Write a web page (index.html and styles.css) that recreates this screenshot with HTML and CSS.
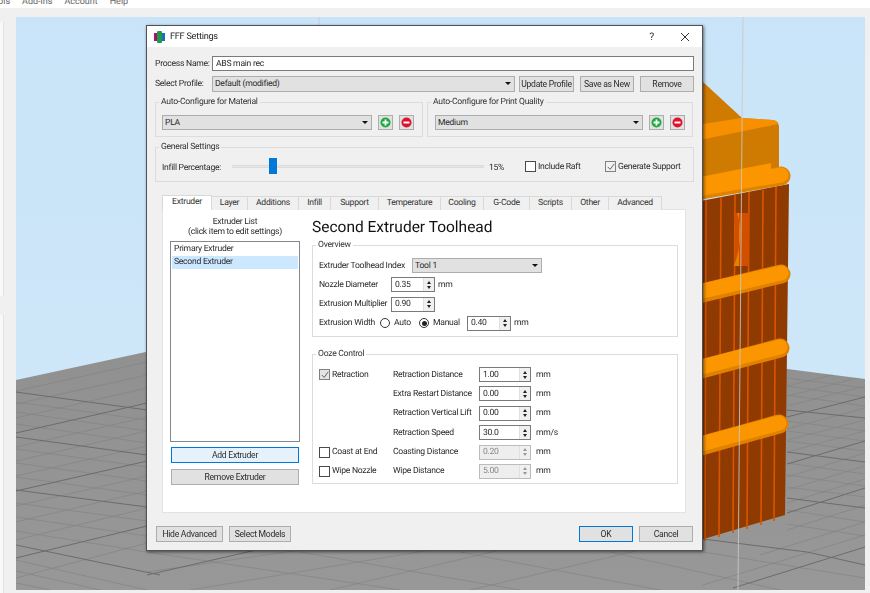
FILE: index.html
```html
<!DOCTYPE html>
<html lang="en">
<head>
<meta charset="utf-8">
<title>FFF Settings</title>
<link rel="stylesheet" href="styles.css">
</head>
<body>
<div class="app">
  <nav class="menubar"><span class="m-tools">Tools</span><span>Add-ins</span><span>Account</span><span>Help</span></nav>
  <div class="workspace">
    <aside class="sidepanel"><div class="panel-a"></div><div class="panel-b"></div></aside>
    <main class="viewport">
      <svg class="scene" viewBox="16 17 849 573" width="849" height="573" aria-hidden="true">
        <defs>
          <linearGradient id="sky" x1="0" y1="0" x2="0" y2="1"><stop offset="0" stop-color="#c9e4f8"/><stop offset="1" stop-color="#d1e8f9"/></linearGradient>
          <linearGradient id="floor" x1="0" y1="0" x2="0" y2="1"><stop offset="0" stop-color="#8f8f8f"/><stop offset="1" stop-color="#989898"/></linearGradient>
          <clipPath id="floorclip"><path d="M16 380L335 311L865 379V590H16Z"/></clipPath>
        </defs>
        <rect x="16" y="17" width="849" height="573" fill="url(#sky)"/>
        <path d="M16 380L335 311L865 379V590H16Z" fill="url(#floor)"/>
        <g clip-path="url(#floorclip)" fill="none">
          <path class="grid-minor" d="M16 402L147 420M16 412L147 431M16 424L147 443M16 449L147 467M16 463L147 481M16 477L147 495M16 503L147 521M16 517L147 536M16 531L147 552M16 560L147 590M16 571L100 590M16 583L50 590M16 391L147 362M16 404L147 375M16 418L147 388M16 447L147 417M16 461L147 431M16 476L147 446M16 506L147 476M16 522L147 491M16 540L147 508M16 578L147 543M147 572L300 550M190 590L430 550M330 590L500 550M470 590L640 550M147 552L400 590M300 552L520 590M460 552L660 590M610 552L780 590M787 378L865 388M787 386L865 397M787 395L865 406M787 421L865 431M787 431L865 441M787 441L865 451M787 463L865 474M787 475L865 486M787 487L865 497M787 510L865 522M787 524L865 536M703 552L865 578M787 386L865 367M787 396L865 376M787 406L865 386M787 429L865 408M787 440L865 420M787 452L865 431M787 477L865 453M787 490L865 466M787 503L865 479M787 530L865 505M760 555L865 522M703 585L865 535"/>
          <path class="grid-major" d="M16 392L147 410M16 433L147 403M16 437L147 455M16 491L147 461M16 490L147 507M16 558L147 526M16 545L160 575M147 575L300 540M787 410L865 418M787 417L865 397M787 452L865 462M787 464L865 441M787 498L865 508M787 513L865 488M703 539L807 552L865 565M733 588L865 547"/>
        </g>
        <path class="rib-wall" d="M690 203L789 184L785 515L690 543Z"/>
        <g class="ribs">
          <path d="M706 200L705 541M721 197L719 537M735 195L733 533M749 192L747 529M763 190L761 525M776 187L774 521"/>
        </g>
        <path d="M735 213H749V266H735Z" fill="#d24f00"/>
        <path d="M737 213C742 226 742 244 734 266H739V213Z" fill="#e28400"/>
        <path d="M690 70L742 118L690 130Z" fill="#cf7a00"/>
        <path d="M690 126L742 118L773 120Q779 121 779 127V172L690 195Z" fill="#cf7a00"/>
        <path d="M690 126L742 118L773 120Q777 121 778 124L690 142Z" fill="#f79000"/>
        <path class="bar-shadow" d="M690 192L781 176"/><path class="bar" d="M690 190L781 175"/>
        <path class="bar-wide" d="M690 179L771 163V178L690 195Z"/>
        <path class="bar-shadow" d="M690 296L781 274"/><path class="bar" d="M690 294L781 273"/>
        <path class="bar-shadow" d="M690 372L780 348"/><path class="bar" d="M690 370L780 347"/>
        <path class="bar-shadow" d="M690 449L779 424"/><path class="bar" d="M690 447L779 423"/>
        <path class="beam" d="M743 17L738 590"/>
        <path class="beam" d="M319 17V30"/>
      </svg>
    </main>
  </div>

  <section class="dialog">
    <header class="titlebar">
      <svg class="app-icon" viewBox="0 0 11 12" width="11" height="12" aria-hidden="true">
        <rect x="0" y="2" width="3" height="8" fill="#a3117f"/>
        <rect x="8" y="2" width="3" height="8" fill="#1a6fc0"/>
        <rect x="3" y="0" width="5" height="12" rx="1" fill="#1f9c45"/>
      </svg>
      <h1 class="window-title">FFF Settings</h1>
      <span class="help-btn">?</span>
      <svg class="close-btn" viewBox="0 0 10 10" width="10" height="10" aria-hidden="true"><path d="M1 1L9 9M9 1L1 9" stroke="#333" stroke-width="1" fill="none"/></svg>
    </header>

    <div class="dialog-body">
      <div class="form-row row-name">
        <label class="top-label">Process Name:</label>
        <div class="text-input">ABS main rec</div>
      </div>
      <div class="form-row row-profile">
        <label class="top-label">Select Profile:</label>
        <div class="combo combo-profile"><span>Default (modified)</span><i class="arrow"></i></div>
        <button class="btn btn-update">Update Profile</button>
        <button class="btn btn-save">Save as New</button>
        <button class="btn btn-remove">Remove</button>
      </div>

      <div class="auto-row">
        <fieldset class="group group-material">
          <legend>Auto-Configure for Material</legend>
          <div class="combo-line">
            <div class="combo combo-material"><span>PLA</span><i class="arrow"></i></div>
            <button class="icon-btn"><svg viewBox="0 0 11 11" width="11" height="11" aria-hidden="true"><circle cx="5.5" cy="5.5" r="5" fill="#1eab3e"/><path d="M5.5 2.5V8.5M2.5 5.5H8.5" stroke="#fff" stroke-width="1.8"/></svg></button>
            <button class="icon-btn"><svg viewBox="0 0 11 11" width="11" height="11" aria-hidden="true"><circle cx="5.5" cy="5.5" r="5" fill="#e0112b"/><path d="M2.5 5.5H8.5" stroke="#fff" stroke-width="2"/></svg></button>
          </div>
        </fieldset>
        <fieldset class="group group-quality">
          <legend>Auto-Configure for Print Quality</legend>
          <div class="combo-line">
            <div class="combo combo-quality"><span>Medium</span><i class="arrow"></i></div>
            <button class="icon-btn"><svg viewBox="0 0 11 11" width="11" height="11" aria-hidden="true"><circle cx="5.5" cy="5.5" r="5" fill="#1eab3e"/><path d="M5.5 2.5V8.5M2.5 5.5H8.5" stroke="#fff" stroke-width="1.8"/></svg></button>
            <button class="icon-btn"><svg viewBox="0 0 11 11" width="11" height="11" aria-hidden="true"><circle cx="5.5" cy="5.5" r="5" fill="#e0112b"/><path d="M2.5 5.5H8.5" stroke="#fff" stroke-width="2"/></svg></button>
          </div>
        </fieldset>
      </div>

      <fieldset class="group group-general">
        <legend>General Settings</legend>
        <div class="general-line">
          <span class="infill-label">Infill Percentage:</span>
          <div class="slider"><i class="slider-thumb"></i></div>
          <span class="percent">15%</span>
          <span class="check raft"><i class="box"></i>Include Raft</span>
          <span class="check"><i class="box checked"><svg viewBox="0 0 10 10" width="8" height="8" aria-hidden="true"><path d="M1 5L4 8L9 1" stroke="#444" fill="none"/></svg></i>Generate Support</span>
        </div>
      </fieldset>

      <div class="tabs">
        <span class="tab active">Extruder</span><span class="tab">Layer</span><span class="tab">Additions</span><span class="tab">Infill</span><span class="tab">Support</span><span class="tab">Temperature</span><span class="tab">Cooling</span><span class="tab">G-Code</span><span class="tab">Scripts</span><span class="tab">Other</span><span class="tab">Advanced</span>
      </div>

      <div class="pane">
        <div class="list-col">
          <p class="list-caption">Extruder List<br>(click item to edit settings)</p>
          <ul class="listbox">
            <li>Primary Extruder</li>
            <li class="selected">Second Extruder</li>
          </ul>
          <button class="btn wide focus-light">Add Extruder</button>
          <button class="btn wide">Remove Extruder</button>
        </div>
        <div class="detail-col">
          <h2 class="detail-title">Second Extruder Toolhead</h2>
          <fieldset class="group group-overview">
            <legend>Overview</legend>
            <div class="ov-row">
              <span class="ov-label-long">Extruder Toolhead Index</span>
              <div class="combo combo-tool"><span>Tool 1</span><i class="arrow"></i></div>
            </div>
            <div class="ov-row">
              <span class="ov-label">Nozzle Diameter</span>
              <div class="spin spin-s"><span>0.35</span><b class="spin-btn"><i class="up"></i><i class="down"></i></b></div>
              <span class="unit">mm</span>
            </div>
            <div class="ov-row">
              <span class="ov-label">Extrusion Multiplier</span>
              <div class="spin spin-s"><span>0.90</span><b class="spin-btn"><i class="up"></i><i class="down"></i></b></div>
            </div>
            <div class="ov-row">
              <span class="ov-label-width">Extrusion Width</span>
              <span class="radio-item auto"><i class="radio"></i>Auto</span>
              <span class="radio-item manual"><i class="radio on"></i>Manual</span>
              <div class="spin spin-s"><span>0.40</span><b class="spin-btn"><i class="up"></i><i class="down"></i></b></div>
              <span class="unit">mm</span>
            </div>
          </fieldset>

          <fieldset class="group group-ooze">
            <legend>Ooze Control</legend>
            <div class="ooze-grid">
              <span class="check"><i class="box checked shaded"><svg viewBox="0 0 10 10" width="8" height="8" aria-hidden="true"><path d="M1 5L4 8L9 1" stroke="#444" fill="none"/></svg></i>Retraction</span>
              <span>Retraction Distance</span>
              <div class="spin"><span>1.00</span><b class="spin-btn"><i class="up"></i><i class="down"></i></b></div>
              <span>mm</span>

              <span class="col-2">Extra Restart Distance</span>
              <div class="spin"><span>0.00</span><b class="spin-btn"><i class="up"></i><i class="down"></i></b></div>
              <span>mm</span>

              <span class="col-2">Retraction Vertical Lift</span>
              <div class="spin"><span>0.00</span><b class="spin-btn"><i class="up"></i><i class="down"></i></b></div>
              <span>mm</span>

              <span class="col-2">Retraction Speed</span>
              <div class="spin"><span>30.0</span><b class="spin-btn"><i class="up"></i><i class="down"></i></b></div>
              <span>mm/s</span>

              <span class="check"><i class="box"></i>Coast at End</span>
              <span>Coasting Distance</span>
              <div class="spin disabled"><span>0.20</span><b class="spin-btn"><i class="up"></i><i class="down"></i></b></div>
              <span>mm</span>

              <span class="check"><i class="box"></i>Wipe Nozzle</span>
              <span>Wipe Distance</span>
              <div class="spin disabled"><span>5.00</span><b class="spin-btn"><i class="up"></i><i class="down"></i></b></div>
              <span>mm</span>
            </div>
          </fieldset>
        </div>
      </div>

      <footer class="dialog-footer">
        <button class="btn btn-hide">Hide Advanced</button>
        <button class="btn btn-models">Select Models</button>
        <span class="spacer"></span>
        <button class="btn btn-ok">OK</button>
        <button class="btn btn-cancel">Cancel</button>
      </footer>
    </div>
  </section>
</div>
</body>
</html>
```

FILE: styles.css
```css
* { box-sizing: border-box; }
html, body { margin: 0; padding: 0; }
body { width: 870px; height: 593px; overflow: hidden; background: #f0f0f0; font-family: Roboto, "Open Sans", sans-serif; font-size: 8.6px; letter-spacing: -.27px; text-rendering: geometricPrecision; color: #2b2b2b; white-space: nowrap; }
button { font: inherit; letter-spacing: inherit; color: inherit; padding: 0; margin: 0; white-space: nowrap; }

.app { position: relative; width: 870px; height: 593px; overflow: hidden; }

.menubar { height: 8px; background: #fff; display: flex; gap: 12px; overflow: hidden; font-size: 9px; letter-spacing: 0; line-height: 6px; color: #666; }
.menubar span { display: block; margin-top: -1px; }
.menubar .m-tools { margin-left: -12px; }

.workspace { display: flex; height: 585px; padding-top: 9px; }
.sidepanel { width: 16px; display: flex; flex-direction: column; gap: 19px; padding-top: 5px; }
.panel-a { width: 4px; height: 274px; background: #f8f8f8; border-right: 1px solid #e4e4e4; }
.panel-b { width: 4px; flex: 1; background: #f8f8f8; border-right: 1px solid #e4e4e4; }
.viewport { width: 849px; height: 573px; overflow: hidden; }
.scene { display: block; filter: blur(.5px); }

.grid-minor { stroke: #848484; stroke-width: .7; }
.grid-major { stroke: #6c6c6c; stroke-width: 1; }
.rib-wall { fill: #8f3a00; }
.ribs path { stroke: #d95600; stroke-width: 1.6; fill: none; }
.bar { stroke: #fb9500; stroke-width: 15; stroke-linecap: round; fill: none; }
.bar-shadow { stroke: #e08200; stroke-width: 19; stroke-linecap: round; fill: none; }
.bar-wide { fill: #fb9500; }
.beam { stroke: #c9c9c9; stroke-width: 1; fill: none; opacity: .85; }

.dialog { position: absolute; left: 146px; top: 25px; width: 557px; height: 526px; background: #f0f0f0; border: 1px solid #4f5357; box-shadow: 1px 1px 3px rgba(0,0,0,.55); display: flex; flex-direction: column; }

.titlebar { height: 21px; flex: none; background: #fff; display: flex; align-items: center; padding: 0 12px 0 7px; filter: blur(.3px); }
.app-icon { flex: none; }
.window-title { margin: 0 0 0 5px; font-size: 9.2px; font-weight: 400; color: #222; flex: 1; }
.help-btn { font-size: 10.5px; margin-right: 26px; color: #333; }

.dialog-body { flex: 1; padding: 9px 8px 0 8px; display: flex; flex-direction: column; filter: blur(.3px); }

.form-row { display: flex; align-items: center; }
.row-name { height: 15px; }
.row-profile { height: 16px; margin-top: 5px; }
.top-label { width: 57px; flex: none; }
.row-name .top-label { padding-top: 1px; }
.text-input { flex: 1; height: 15px; background: #fff; border: 1px solid #7a7a7a; line-height: 13px; padding: 1px 0 0 3px; }

.combo { position: relative; height: 15px; background: #e1e1e1; border: 1px solid #adadad; line-height: 13px; padding: 1px 0 0 2px; flex: none; }
.arrow { position: absolute; right: 3px; top: 5px; width: 0; height: 0; border-left: 3px solid transparent; border-right: 3px solid transparent; border-top: 3px solid #111; }
.combo-profile { width: 303px; height: 16px; line-height: 14px; padding-top: 0; }

.btn { height: 16px; background: #e1e1e1; border: 1px solid #adadad; text-align: center; flex: none; line-height: 13px; }
.btn-update { width: 55px; margin-left: 4px; }
.btn-save { width: 54px; margin-left: 6px; }
.btn-remove { width: 54px; margin-left: 6px; }

.group { margin: 0; padding: 0; border: 1px solid #dcdcdc; min-width: 0; }
.group legend { padding: 0 2px; margin-left: 3px; line-height: 12px; height: 12px; color: #333; }

.auto-row { display: flex; gap: 4px; margin-top: 4px; }
.group-material { width: 268px; height: 41px; }
.group-quality { width: 266px; height: 41px; }
.combo-line { display: flex; align-items: center; padding: 7px 0 0 6px; }
.combo-material { width: 210px; }
.combo-quality { width: 208px; margin-left: 1px; }
.icon-btn { width: 15px; height: 15px; background: #e1e1e1; border: 1px solid #adadad; display: flex; align-items: center; justify-content: center; flex: none; margin-left: 6px; }
.icon-btn svg { display: block; }

.group-general { height: 41px; margin-top: 4px; }
.general-line { display: flex; align-items: center; height: 20px; padding: 7px 0 0 6px; }
.infill-label { width: 70px; flex: none; padding-top: 3px; }
.slider { position: relative; width: 252px; height: 3px; background: #e7e7e7; border: 1px solid #dcdcdc; flex: none; }
.slider-thumb { position: absolute; left: 36px; top: -8px; width: 8px; height: 16px; background: #0078d7; }
.percent { width: 36px; flex: none; margin-left: 5px; padding-top: 3px; }
.check { display: flex; align-items: center; gap: 2px; white-space: nowrap; }
.raft { width: 80px; flex: none; }
.box { width: 11px; height: 11px; border: 1px solid #4a4a4a; background: #fff; display: flex; align-items: center; justify-content: center; flex: none; }
.box.checked { border-color: #808080; background: #f2f2f2; }
.box.shaded { background: #e4e4e4; }

.tabs { display: grid; grid-template-columns: 50px 36px 51px 32px 48px 62px 43px 46px 42px 37px 53px; width: 500px; height: 15px; margin: 13px 0 0 7px; position: relative; z-index: 1; }
.tab { background: #f0f0f0; border: 1px solid #d9d9d9; border-left-width: 0; border-bottom: 0; height: 14px; margin-top: 1px; text-align: center; line-height: 12px; color: #333; }
.tab.active { background: #fff; height: 15px; margin-top: 0; border-left-width: 1px; line-height: 12px; }

.pane { height: 304px; width: 524px; margin: -1px 0 0 7px; background: #fff; border: 1px solid #e3e3e3; display: flex; gap: 12px; padding: 0 6px 0 7px; }
.list-col { width: 130px; flex: none; display: flex; flex-direction: column; }
.list-caption { margin: 7px 0 0; text-align: center; line-height: 10px; height: 24px; }
.listbox { list-style: none; margin: 0; padding: 1px; height: 201px; border: 1px solid #828790; background: #fff; line-height: 13px; }
.listbox li { height: 13px; padding-left: 2px; }
.listbox li.selected { background: #cce8ff; }
.wide { width: 128px; margin: 5px 0 0 1px; height: 16px; }
.wide + .wide { margin-top: 6px; }
.focus-light { background: #e5f1fb; border-color: #0078d7; }

.detail-col { width: 366px; flex: none; }
.detail-title { margin: 6px 0 0; height: 22px; font-size: 15.5px; letter-spacing: 0; line-height: 22px; font-weight: 400; color: #111; white-space: nowrap; }
.group-overview { height: 98px; margin-top: 1px; }
.ov-row { display: flex; align-items: center; height: 15px; padding-left: 6px; margin-top: 4.3px; }
.ov-row:first-of-type { margin-top: 7px; }
.ov-label-long { width: 93px; flex: none; }
.ov-label { width: 72px; flex: none; }
.ov-label-width { width: 61px; flex: none; }
.combo-tool { width: 130px; }
.radio-item { display: flex; align-items: center; gap: 4px; flex: none; }
.radio-item.auto { width: 39px; }
.radio-item.manual { width: 48px; }
.radio { width: 10px; height: 10px; border-radius: 50%; border: 1px solid #333; background: #fff; flex: none; position: relative; }
.radio.on::after { content: ""; position: absolute; left: 1.5px; top: 1.5px; width: 5px; height: 5px; border-radius: 50%; background: #222; }
.unit { margin-left: 3px; }

.spin { height: 15px; width: 52px; border: 1px solid #7a7a7a; background: #fff; display: flex; align-items: center; justify-content: space-between; padding-left: 3px; flex: none; }
.spin-s { width: 44px; }
.spin-btn { width: 11px; height: 13px; background: #f0f0f0; border-left: 1px solid #e0e0e0; display: flex; flex-direction: column; align-items: center; justify-content: center; gap: 2px; flex: none; }
.up { width: 0; height: 0; border-left: 2.5px solid transparent; border-right: 2.5px solid transparent; border-bottom: 3px solid #222; }
.down { width: 0; height: 0; border-left: 2.5px solid transparent; border-right: 2.5px solid transparent; border-top: 3px solid #222; }
.spin.disabled { background: #eeeeee; border-color: #bcbcbc; color: #888; }
.spin.disabled .up { border-bottom-color: #999; }
.spin.disabled .down { border-top-color: #999; }

.group-ooze { height: 136px; margin-top: 11px; }
.ooze-grid { display: grid; grid-template-columns: 74px 86px 52px auto; grid-auto-rows: 15px; row-gap: 4.4px; align-items: center; padding: 7px 0 0 6px; }
.ooze-grid .col-2 { grid-column: 2; }
.ooze-grid .spin + span { margin-left: 5px; }

.dialog-footer { display: flex; margin-top: 13px; }
.spacer { flex: 1; }
.btn-hide { width: 67px; margin-left: 1px; }
.btn-models { width: 62px; margin-left: 6px; }
.btn-ok { width: 54px; border-color: #0078d7; border-width: 1.5px; }
.btn-cancel { width: 54px; margin: 0 1px 0 6px; }
```
